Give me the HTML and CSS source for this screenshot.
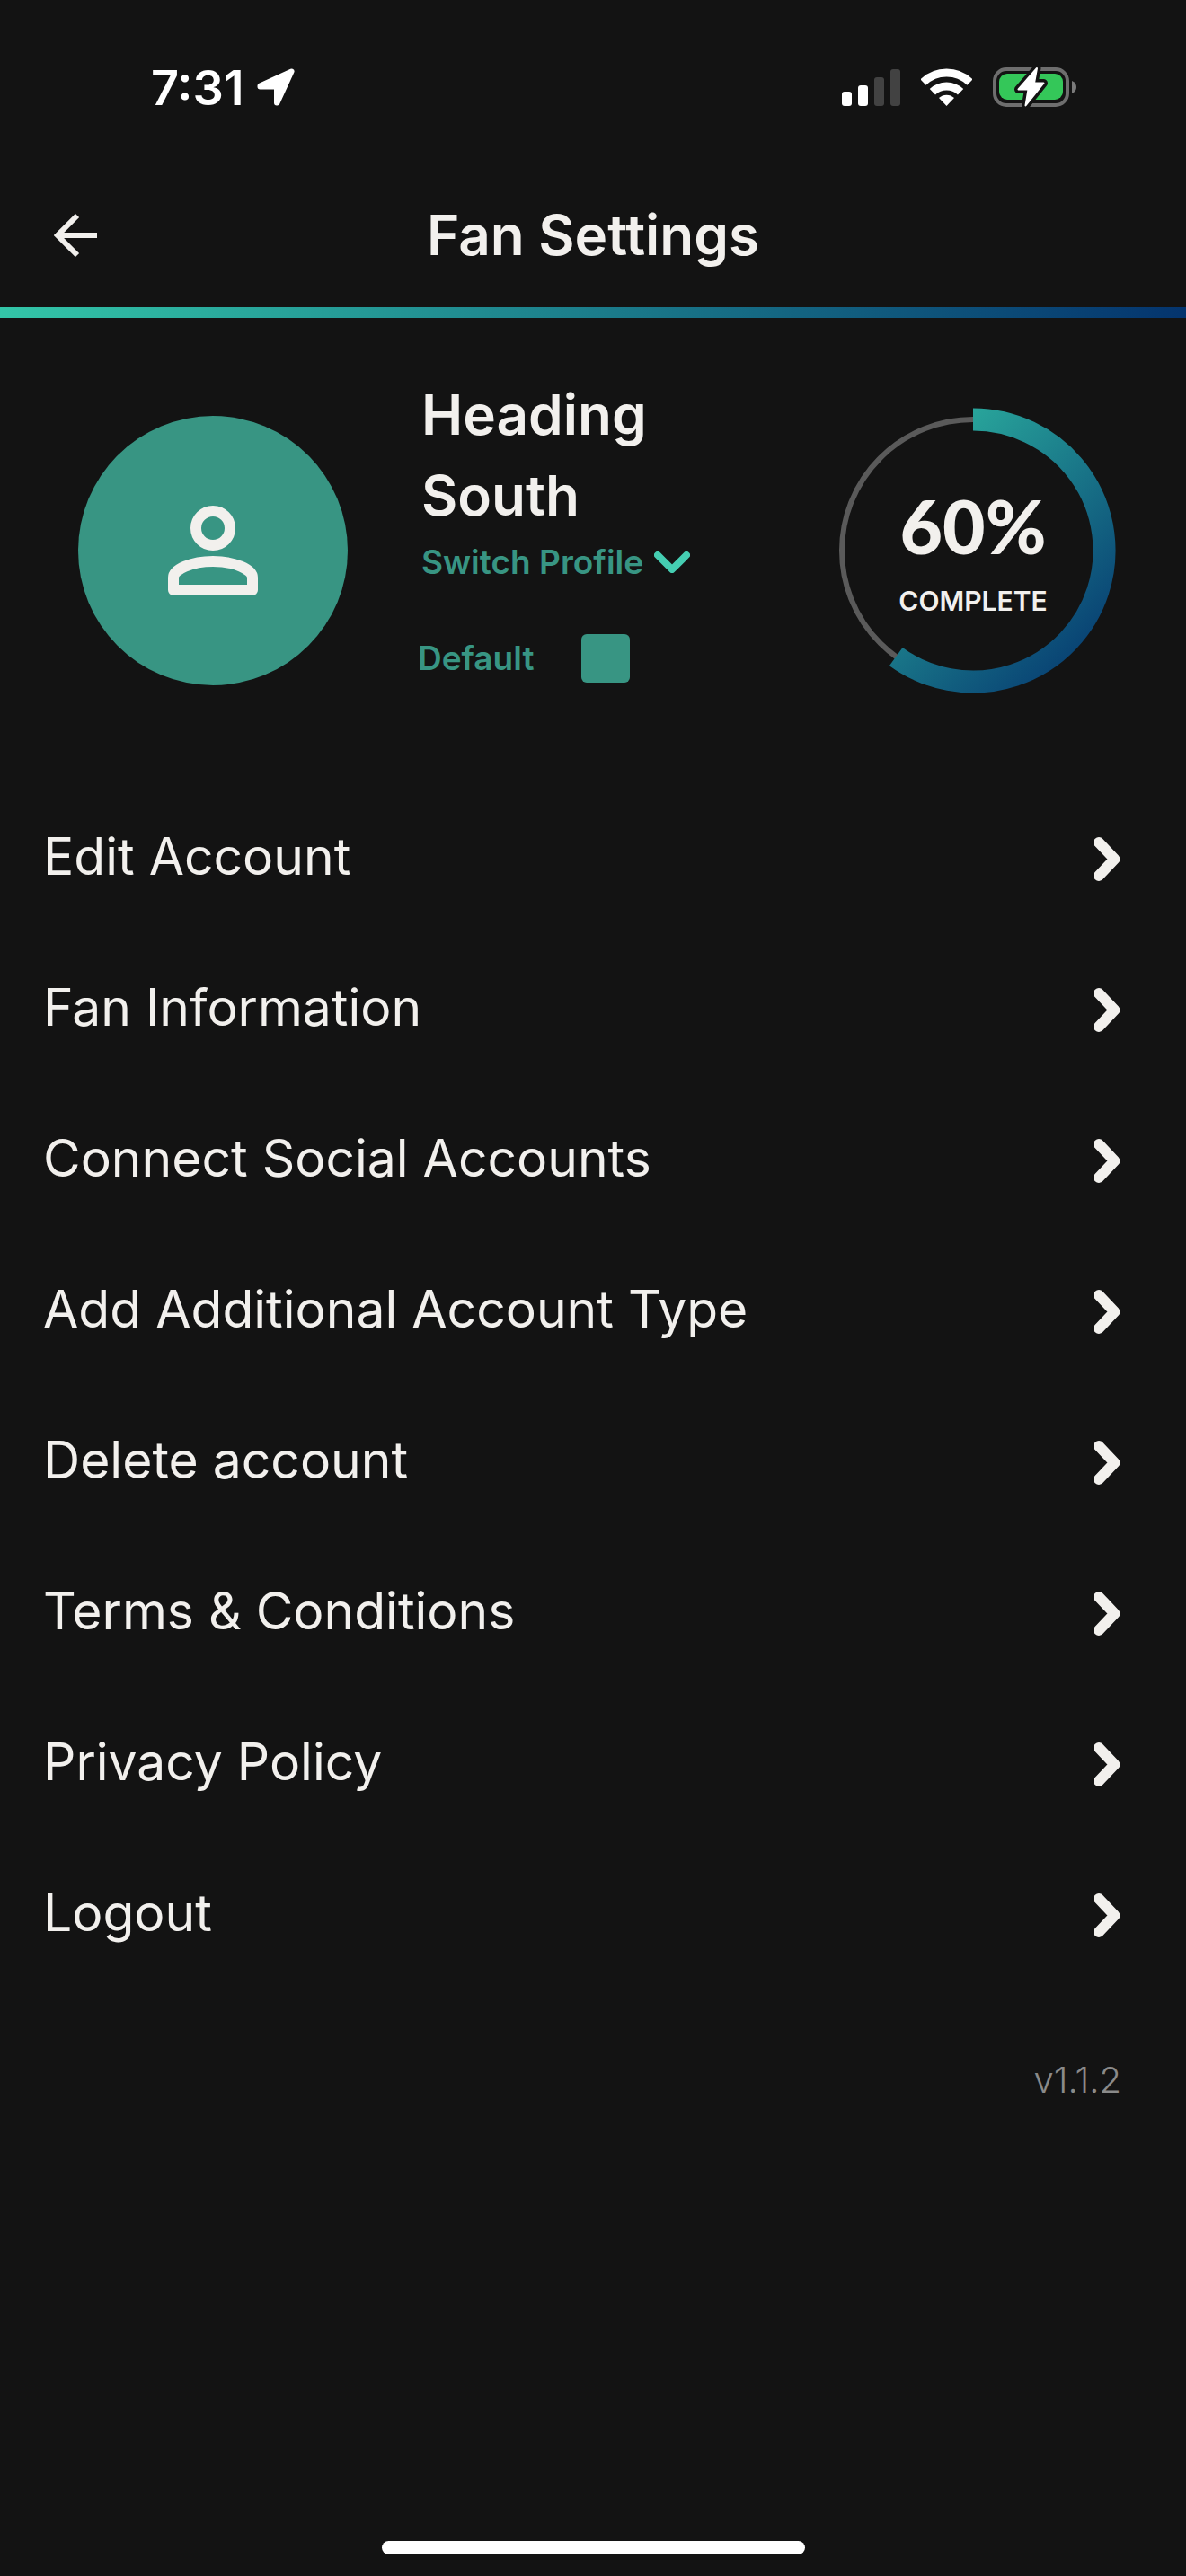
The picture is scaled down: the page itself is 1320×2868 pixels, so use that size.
FILE: index.html
```html
<!DOCTYPE html>
<html lang="en">
<head>
  <meta charset="utf-8">
  <meta name="viewport" content="width=device-width, initial-scale=1">
  <title>Fan Settings</title>
  <link rel="stylesheet" href="styles.css">
</head>
<body>
  <svg class="defs" aria-hidden="true">
    <symbol id="chevron" viewBox="0 0 30 49">
      <path d="M5 6 22.500 24.500 5 43" fill="none" stroke="currentColor" stroke-width="12" stroke-linecap="round" stroke-linejoin="round"/>
    </symbol>
  </svg>

  <div class="status">
    <div class="status-group">
      <span class="clock">7:31</span>
      <svg width="42" height="42" viewBox="0 0 42 42" aria-hidden="true">
        <path d="M38.500 3.500 3.500 19.500V20.500H22V38.500H22.500Z" fill="currentColor" stroke="currentColor" stroke-width="6" stroke-linejoin="round"/>
      </svg>
    </div>
    <div class="status-group status-right">
      <svg width="65" height="41" viewBox="0 0 65 41" aria-hidden="true">
        <g fill="currentColor">
          <rect y="25" width="11" height="16" rx="3"/>
          <rect x="18" y="18" width="11" height="23" rx="3"/>
          <rect x="36" y="9" width="11" height="32" rx="3" opacity=".2"/>
          <rect x="54" width="11" height="41" rx="3" opacity=".2"/>
        </g>
      </svg>
      <svg width="57" height="42" viewBox="0 0 57 42" aria-hidden="true">
        <g fill="none" stroke="currentColor" stroke-width="9">
          <path d="M2.500 15.500A37.500 37.500 0 0 1 54.500 15.500"/>
          <path d="M12.900 26.300A22.500 22.500 0 0 1 44.100 26.300"/>
        </g>
        <path d="M28.500 42 20 33A12.500 12.500 0 0 1 37 33Z" fill="currentColor"/>
      </svg>
      <svg width="93" height="46" viewBox="0 0 93 46" aria-hidden="true">
        <rect x="2" y="3" width="81" height="40" rx="13" fill="none" stroke="#6e6e6e" stroke-width="4"/>
        <path d="M88 16Q93 18 93 23T88 30Z" fill="#7a7a7a"/>
        <rect x="7" y="8" width="71" height="29" rx="9" fill="#34c759"/>
        <g stroke-linejoin="round">
          <path d="M49 2 28.500 25.500H39.500L36.500 43.500 56.500 18.500H46Z" fill="#131313" stroke="#131313" stroke-width="9"/>
          <path d="M49 2 28.500 25.500H39.500L36.500 43.500 56.500 18.500H46Z" fill="#fff" stroke="#fff" stroke-width="2"/>
        </g>
      </svg>
    </div>
  </div>

  <header class="header">
    <button class="back" type="button" aria-label="Back">
      <svg width="48" height="48" viewBox="0 0 48 48" aria-hidden="true">
        <path d="M26 2 4 24 26 46M4 24H48" fill="none" stroke="currentColor" stroke-width="6"/>
      </svg>
    </button>
    <h1 class="title">Fan Settings</h1>
  </header>

  <main>
    <section class="profile">
      <div class="avatar">
        <svg width="100" height="100" viewBox="0 0 100 100" aria-hidden="true">
          <g fill="none" stroke="currentColor" stroke-width="12" stroke-linejoin="round">
            <circle cx="50" cy="25" r="19"/>
            <path d="M6 94V80C6 71 26 62 50 62S94 71 94 80V94Z"/>
          </g>
        </svg>
      </div>
      <div class="details">
        <h2 class="name">Heading South</h2>
        <button class="switch" type="button">Switch Profile
          <svg width="40" height="24" viewBox="0 0 40 24" aria-hidden="true">
            <path d="M4 4 20 20 36 4" fill="none" stroke="#45ceb2" stroke-width="8" stroke-linecap="round" stroke-linejoin="round"/>
          </svg>
        </button>
        <div class="default">
          <label for="default">Default</label>
          <input class="check" type="checkbox" id="default" checked>
        </div>
      </div>
      <div class="progress">
        <svg class="ring" viewBox="0 0 318 318" aria-hidden="true">
          <defs>
            <linearGradient id="arc" gradientUnits="userSpaceOnUse" x1="13" y1="13" x2="305" y2="305">
              <stop offset="0" stop-color="#33c6a8"/>
              <stop offset="1" stop-color="#04346e"/>
            </linearGradient>
          </defs>
          <circle cx="159" cy="159" r="146" fill="none" stroke="#5a5a5a" stroke-width="6"/>
          <path d="M159 13A146 146 0 1 1 73.200 277.100" fill="none" stroke="url(#arc)" stroke-width="25"/>
        </svg>
        <div class="progress-text">
          <strong class="percent">60%</strong>
          <span class="complete">COMPLETE</span>
        </div>
      </div>
    </section>

    <nav class="menu">
      <a class="item" href="#edit">Edit Account<svg class="chevron"><use href="#chevron"/></svg></a>
      <a class="item" href="#information">Fan Information<svg class="chevron"><use href="#chevron"/></svg></a>
      <a class="item" href="#social">Connect Social Accounts<svg class="chevron"><use href="#chevron"/></svg></a>
      <a class="item" href="#type">Add Additional Account Type<svg class="chevron"><use href="#chevron"/></svg></a>
      <a class="item" href="#delete">Delete account<svg class="chevron"><use href="#chevron"/></svg></a>
      <a class="item" href="#terms">Terms &amp; Conditions<svg class="chevron"><use href="#chevron"/></svg></a>
      <a class="item" href="#privacy">Privacy Policy<svg class="chevron"><use href="#chevron"/></svg></a>
      <a class="item" href="#logout">Logout<svg class="chevron"><use href="#chevron"/></svg></a>
    </nav>
    <p class="version">v1.1.2</p>
  </main>

  <div class="home"></div>
</body>
</html>
```
FILE: styles.css
```css
* {
  box-sizing: border-box;
}

body {
  margin: 0;
  min-height: 100vh;
  display: flex;
  flex-direction: column;
  background: #131313;
  color: #f2f0ed;
  font-family: Inter, "Liberation Sans", sans-serif;
}

h1,
h2,
p {
  margin: 0;
}

button {
  padding: 0;
  border: 0;
  background: none;
  color: inherit;
  font: inherit;
}

svg {
  display: block;
  flex: none;
}

.defs {
  position: absolute;
  width: 0;
  height: 0;
}

/* Status bar */
.status {
  display: flex;
  justify-content: space-between;
  padding: 73px 122px 65px 168px;
  color: #fff;
}

.status-group {
  display: flex;
  align-items: center;
  height: 48px;
  gap: 14px;
}

.status-right {
  gap: 23px;
}

.clock {
  font-size: 54px;
  font-weight: 600;
}

/* Header */
.header {
  display: grid;
  grid-template-columns: 1fr auto 1fr;
  align-items: center;
  padding: 36px 60px 40px;
  border-bottom: 12px solid;
  border-image: linear-gradient(90deg, #33c6a8, #04346e) 1;
}

.title {
  font-size: 62px;
  line-height: 80px;
  font-weight: 600;
}

.back {
  justify-self: start;
}

/* Profile */
.profile {
  display: flex;
  align-items: center;
  gap: 78px;
  padding: 63px 78px 63px 87px;
}

.avatar {
  display: grid;
  place-items: center;
  flex: none;
  width: 300px;
  height: 300px;
  border-radius: 50%;
  background: #389583;
}

.details {
  flex: 1;
  padding-bottom: 49px;
  color: #389583;
  font-size: 37px;
  line-height: 48px;
  font-weight: 600;
}

.name {
  padding-left: 4px;
  color: #f2f0ed;
  font-size: 62px;
  line-height: 90px;
  font-weight: 600;
}

.switch {
  display: flex;
  align-items: center;
  gap: 12px;
  margin: 5px 0 56px;
  padding-left: 4px;
  white-space: nowrap;
}

.default {
  display: flex;
  align-items: center;
  gap: 52px;
}

.check {
  appearance: none;
  width: 54px;
  height: 54px;
  margin: 0;
  border-radius: 6px;
  background: #389583;
}

.progress {
  display: grid;
  place-items: center;
  flex: none;
  width: 318px;
}

.ring,
.progress-text {
  grid-area: 1 / 1;
}

.ring {
  width: 100%;
}

.progress-text {
  display: flex;
  flex-direction: column;
  align-items: center;
}

.percent {
  font-family: Lato, Inter, sans-serif;
  font-size: 82px;
  line-height: 112px;
  font-weight: 900;
}

.complete {
  font-size: 30px;
  line-height: 56px;
  font-weight: 600;
}

/* Menu */
.item {
  display: flex;
  align-items: center;
  justify-content: space-between;
  height: 168px;
  padding: 0 72px 6px 48px;
  color: inherit;
  font-size: 57px;
  text-decoration: none;
}

.chevron {
  width: 30px;
  height: 49px;
  margin-top: 6px;
}

.version {
  padding: 72px 72px 0;
  color: #8a8a8a;
  font-size: 40px;
  line-height: 56px;
  font-weight: 300;
  text-align: right;
}

/* Home indicator */
.home {
  width: 471px;
  max-width: 50%;
  height: 15px;
  margin: auto auto 24px;
  border-radius: 8px;
  background: #fff;
}
```
